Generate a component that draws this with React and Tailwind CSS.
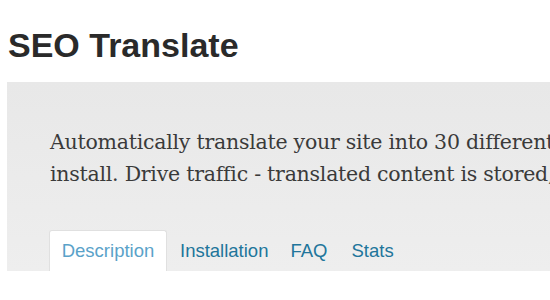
export default function App() {
  return (
    <div className="w-[550px] h-[300px] overflow-hidden bg-white pl-[7px]">
      <h1 className="pt-[28px] pl-[1px] text-[34px] leading-[34px] font-bold text-[#2a2a2a] whitespace-nowrap" style={{ fontFamily: '"Liberation Sans", Arial, sans-serif' }}>
        SEO Translate
      </h1>
      <div className="mt-[20px] h-[189px] bg-gradient-to-b from-[#e8e8e8] to-[#eeeeee] flex flex-col overflow-hidden">
        <div className="pl-[43px] pt-[44px] text-[20.5px] leading-[32px] tracking-[-0.25px] text-[#3a3a3a] whitespace-nowrap" style={{ fontFamily: '"DejaVu Serif", Georgia, serif' }}>
          <p>Automatically translate your site into 30 different languages</p>
          <p>install. Drive traffic - translated content is stored, indexed</p>
        </div>
        <div className="mt-auto pl-[42px] flex items-end text-[18.5px] whitespace-nowrap" style={{ fontFamily: '"Liberation Sans", Arial, sans-serif' }}>
          <div className="w-[118px] h-[41px] bg-white rounded-t-[3px] border-t border-x border-[#e0e0e0] flex items-center justify-center text-[#5aa2c9]">Description</div>
          <div className="h-[41px] flex items-center pl-[13px] text-[#21759b]">Installation</div>
          <div className="h-[41px] flex items-center pl-[22px] text-[#21759b]">FAQ</div>
          <div className="h-[41px] flex items-center pl-[24px] text-[#21759b]">Stats</div>
        </div>
      </div>
    </div>
  );
}
